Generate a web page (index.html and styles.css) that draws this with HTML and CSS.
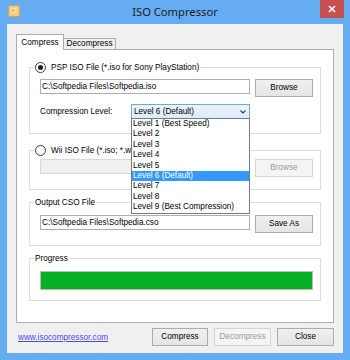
FILE: index.html
```html
<!DOCTYPE html>
<html>
<head>
<meta charset="utf-8">
<title>ISO Compressor</title>
<link rel="stylesheet" href="styles.css">
</head>
<body>
<div class="window">
  <div class="titlebar">
    <div class="tb-left">
      <svg class="app-icon" viewBox="0 0 12 12" width="12" height="12">
        <rect x="0.5" y="0.5" width="11" height="11" rx="1.5" fill="#EDCB83" stroke="#CDA55C"/>
        <rect x="2.5" y="3" width="6" height="5" rx="0.5" fill="#F6DEA6"/>
        <rect x="3.5" y="4.5" width="3" height="2" fill="#D9B46C"/>
      </svg>
    </div>
    <div class="title">ISO Compressor</div>
    <div class="tb-right">
      <div class="close-btn">
        <svg viewBox="0 0 8 8" width="8" height="8"><path d="M1 1 L7 7 M7 1 L1 7" stroke="#fff" stroke-width="1.6" fill="none"/></svg>
      </div>
    </div>
  </div>
  <div class="client">
    <div class="tabs">
      <div class="tab active">Compress</div>
      <div class="tab inactive">Decompress</div>
    </div>
    <div class="panel">
      <fieldset class="group g-psp">
        <legend class="legend"><span class="radio checked"></span><span>PSP ISO File (*.iso for Sony PlayStation)</span></legend>
        <div class="row">
          <div class="field">C:\Softpedia Files\Softpedia.iso</div>
          <div class="btn">Browse</div>
        </div>
        <div class="row level-row">
          <span class="lbl">Compression Level:</span>
          <div class="combo">
            <span class="combo-text">Level 6 (Default)</span>
            <svg class="chev" viewBox="0 0 6 4" width="6" height="4"><path d="M0.5 0.5 L3 3 L5.5 0.5" stroke="#3a3a3a" stroke-width="1.1" fill="none"/></svg>
            <ul class="combo-list">
              <li>Level 1 (Best Speed)</li>
              <li>Level 2</li>
              <li>Level 3</li>
              <li>Level 4</li>
              <li>Level 5</li>
              <li class="sel">Level 6 (Default)</li>
              <li>Level 7</li>
              <li>Level 8</li>
              <li>Level 9 (Best Compression)</li>
            </ul>
          </div>
        </div>
      </fieldset>
      <fieldset class="group g-wii">
        <legend class="legend"><span class="radio"></span><span>Wii ISO File (*.iso; *.wbfs)</span></legend>
        <div class="row">
          <div class="field disabled"></div>
          <div class="btn disabled">Browse</div>
        </div>
      </fieldset>
      <fieldset class="group g-out">
        <legend class="legend plain">Output CSO File</legend>
        <div class="row">
          <div class="field">C:\Softpedia Files\Softpedia.cso</div>
          <div class="btn">Save As</div>
        </div>
      </fieldset>
      <fieldset class="group g-prog">
        <legend class="legend plain">Progress</legend>
        <div class="progress"><div class="progress-fill" style="width:100%"></div></div>
      </fieldset>
    </div>
    <div class="footer">
      <a class="link" href="#">www.isocompressor.com</a>
      <div class="btn fbtn w56">Compress</div>
      <div class="btn fbtn disabled">Decompress</div>
      <div class="btn fbtn">Close</div>
    </div>
  </div>
</div>
</body>
</html>
```

FILE: styles.css
```css
* { box-sizing: border-box; }
html, body { margin: 0; padding: 0; }
body {
  width: 350px;
  height: 360px;
  overflow: hidden;
  font-family: "Liberation Sans", Arial, sans-serif;
  font-size: 8.2px;
  color: #000;
}
.window {
  width: 350px;
  height: 360px;
  background: #66ACF2;
  display: flex;
  flex-direction: column;
}
.titlebar {
  height: 24px;
  display: grid;
  grid-template-columns: 1fr auto 1fr;
  align-items: start;
}
.app-icon { display: block; margin: 5px 0 0 8px; }
.title {
  font-family: "Noto Sans", "Liberation Sans", sans-serif;
  font-size: 11.2px;
  line-height: 23px;
  color: #1a1a1a;
}
.tb-right { display: flex; justify-content: flex-end; }
.close-btn {
  width: 24px;
  height: 18px;
  margin-right: 6px;
  background: #C75050;
  display: flex;
  align-items: center;
  justify-content: center;
}
.close-btn svg { display: block; }
.client {
  flex: 1;
  margin: 0 7px 7px;
  background: #F0F0F0;
  display: flex;
  flex-direction: column;
}
.tabs {
  display: flex;
  align-items: flex-end;
  margin: 10px 0 0 9px;
}
.tab {
  border: 1px solid #ACACAC;
  border-bottom: none;
  text-align: center;
}
.tab.active {
  width: 48px;
  height: 16px;
  line-height: 15px;
  background: #fff;
  margin-bottom: -1px;
  position: relative;
  z-index: 1;
}
.tab.inactive {
  width: 52px;
  height: 11px;
  line-height: 10px;
  background: #F0F0F0;
  border-left: none;
}
.panel {
  margin: 0 9px 0 9px;
  background: #fff;
  border: 1px solid #ACACAC;
  padding: 12px 0 21px;
}
.group {
  margin: 0 12px;
  border: 1px solid #DCDCDC;
  padding: 6px 7px 14px 10px;
  min-width: 0;
}
.legend {
  margin-left: -6px;
  padding: 0 1px;
  height: 11px;
  line-height: 11px;
  display: flex;
  align-items: center;
  gap: 5px;
}
.radio {
  width: 11px;
  height: 11px;
  border: 1px solid #3C3C3C;
  border-radius: 50%;
  background: #fff;
  display: flex;
  align-items: center;
  justify-content: center;
  flex: none;
}
.radio.checked::after {
  content: "";
  width: 5px;
  height: 5px;
  border-radius: 50%;
  background: #1E1E1E;
}
.g-wii { margin-top: 11px; padding-top: 3px; padding-bottom: 12px; }
.g-out { margin-top: 7px; padding-top: 7px; padding-bottom: 12px; }
.g-prog { margin-top: 7px; padding-top: 7px; padding-bottom: 10px; }
.row {
  display: flex;
  align-items: flex-start;
  gap: 5px;
}
.level-row {
  margin-top: 7px;
  align-items: center;
  gap: 0;
}
.field {
  width: 210px;
  height: 15px;
  border: 1px solid #ABADB3;
  background: #fff;
  padding: 0 1px;
  line-height: 13px;
  white-space: nowrap;
  overflow: hidden;
}
.field.disabled {
  background: #F0F0F0;
  border-color: #D9D9D9;
}
.btn {
  width: 58px;
  height: 18px;
  border: 1px solid #ACACAC;
  background: linear-gradient(#F0F0F0, #E5E5E5);
  text-align: center;
  line-height: 16px;
  white-space: nowrap;
}
.btn.disabled {
  background: #F4F4F4;
  border-color: #D5D5D5;
  color: #9A9A9A;
}
.lbl { width: 91px; }
.combo {
  width: 119px;
  height: 15px;
  border: 1px solid #6FA7DF;
  background: linear-gradient(#ECF4FC, #DCECFC);
  position: relative;
  display: flex;
  align-items: center;
  padding-left: 2px;
}
.combo-text { flex: 1; line-height: 13px; }
.chev { display: block; margin-right: 3px; }
.combo-list {
  position: absolute;
  top: 100%;
  left: -1px;
  width: 119px;
  margin: 0;
  padding: 0;
  list-style: none;
  background: #fff;
  border: 1px solid #7A7A7A;
  z-index: 2;
}
.combo-list li {
  height: 10.4px;
  line-height: 10.4px;
  padding-left: 1px;
  white-space: nowrap;
}
.combo-list li.sel { background: #3399FF; color: #fff; }
.progress {
  width: 273px;
  height: 19px;
  border: 1px solid #BCBCBC;
  background: #E6E6E6;
}
.progress-fill { height: 100%; background: #06B025; }
.footer {
  display: flex;
  align-items: center;
  gap: 6px;
  margin-top: 5px;
  padding: 0 9px 0 11px;
}
.link {
  margin-right: auto;
  color: #4A4AEB;
  text-decoration: underline;
}
.fbtn { width: 57px; }
.fbtn.w56 { width: 56px; }
```
